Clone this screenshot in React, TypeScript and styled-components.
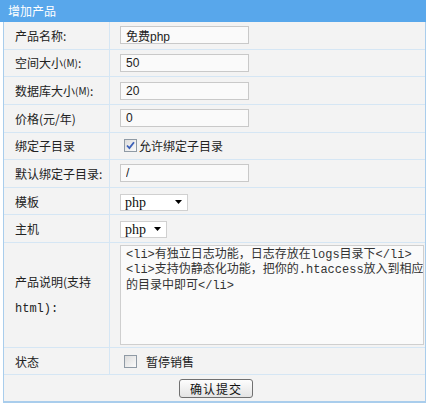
import React from "react";
import styled, { createGlobalStyle } from "styled-components";

const GlobalStyle = createGlobalStyle`
  html, body {
    margin: 0;
    padding: 0;
    background: #ffffff;
  }
  body {
    font-family: "Liberation Sans", "Noto Sans CJK SC", sans-serif;
    font-size: 12px;
    color: #222;
  }
`;

const Panel = styled.div`
  width: 426px;
`;

const Header = styled.div`
  height: 22px;
  line-height: 22px;
  padding-left: 8px;
  background: #58a7eb;
  color: #fff;
  font-size: 12px;
  font-family: "Noto Sans CJK SC", sans-serif;
  box-sizing: border-box;
`;

const Table = styled.div`
  margin-left: 3px;
  border-left: 1px solid #a9cdec;
  border-right: 1px solid #a9cdec;
  border-bottom: 2px solid #a9cdec;
  background: #f3f3f3;
`;

const Row = styled.div<{ $h?: number }>`
  display: grid;
  grid-template-columns: 106px 1fr;
  height: ${(p) => p.$h ?? 27.625}px;
  box-sizing: border-box;
  border-bottom: 1px solid #d5e6f4;
`;

const Label = styled.div`
  display: flex;
  align-items: center;
  padding-left: 11px;
  border-right: 1px solid #d5e6f4;
  font-family: "Noto Sans CJK SC", sans-serif;
  font-size: 12px;
  line-height: 25px;
  white-space: nowrap;
`;

const Small = styled.span`
  font-size: 10px;
`;

const Mono = styled.span`
  font-family: "Liberation Mono", monospace;
  font-size: 12px;
`;

const Cell = styled.div<{ $top?: boolean }>`
  display: flex;
  align-items: ${(p) => (p.$top ? "flex-start" : "center")};
  padding-left: 10px;
  padding-top: ${(p) => (p.$top ? "2px" : "0")};
  font-family: "Noto Sans CJK SC", sans-serif;
`;

const TextInput = styled.input`
  width: 129px;
  height: 18px;
  box-sizing: border-box;
  border: 1px solid #c9c9c9;
  background: #fafafa;
  padding: 0 5px;
  font-family: "Liberation Sans", "Noto Sans CJK SC", sans-serif;
  font-size: 12px;
  color: #222;
  outline: none;
`;

const SelectWrap = styled.div<{ $w: number }>`
  position: relative;
  width: ${(p) => p.$w}px;
  height: 17px;
`;

const Select = styled.select`
  appearance: none;
  width: 100%;
  height: 100%;
  box-sizing: border-box;
  border: 1px solid #d0d0d0;
  background: #fff;
  padding: 0 0 0 4px;
  font-family: "Liberation Serif", serif;
  font-size: 14px;
  color: #111;
  outline: none;
`;

const Arrow = styled.svg`
  position: absolute;
  right: 6px;
  top: 7px;
  pointer-events: none;
`;

const CheckLabel = styled.label<{ $gap: number }>`
  display: flex;
  align-items: center;
  gap: ${(p) => p.$gap}px;
  font-family: "Noto Sans CJK SC", sans-serif;
  font-size: 12px;
`;

const Box = styled.span`
  width: 11px;
  height: 11px;
  border: 1px solid #8f9aa5;
  background: linear-gradient(135deg, #dcdcdc, #fbfbfb);
  display: flex;
  align-items: center;
  justify-content: center;
  margin-left: 4px;
`;

const TextArea = styled.textarea`
  width: 304px;
  height: 100px;
  box-sizing: border-box;
  border: 1px solid #cfcfcf;
  background: #fafafa;
  padding: 2px 0 0 5px;
  font-family: "Liberation Mono", "Noto Sans CJK SC", monospace;
  font-size: 12px;
  line-height: 15.3px;
  color: #333;
  resize: none;
  overflow: hidden;
  white-space: pre;
  outline: none;
`;

const Footer = styled.div`
  height: 26px;
  display: flex;
  align-items: center;
  justify-content: center;
  padding-left: 3px;
`;

const SubmitButton = styled.button`
  width: 74px;
  height: 19px;
  padding: 0;
  border: 1px solid #707070;
  border-radius: 3px;
  background: linear-gradient(#fdfdfd, #e4e4e4);
  font-family: "Noto Sans CJK SC", sans-serif;
  font-size: 12px;
  letter-spacing: 1px;
  color: #111;
`;

const SelectBox = ({ w }: { w: number }) => (
  <SelectWrap $w={w}>
    <Select defaultValue="php">
      <option value="php">php</option>
    </Select>
    <Arrow width="7" height="4" viewBox="0 0 7 4">
      <path d="M0 0h7L3.5 4z" fill="#000" />
    </Arrow>
  </SelectWrap>
);

const Check = ({ checked }: { checked?: boolean }) => (
  <Box>
    {checked && (
      <svg width="9" height="9" viewBox="0 0 9 9">
        <path d="M1 4.5l2.4 2.6L8 1.2" fill="none" stroke="#3a5fb8" strokeWidth="1.8" />
      </svg>
    )}
  </Box>
);

const description =
  "<li>有独立日志功能，日志存放在logs目录下</li>\n<li>支持伪静态化功能，把你的.htaccess放入到相应\n的目录中即可</li>";

export default function App() {
  return (
    <>
      <GlobalStyle />
      <Panel>
        <Header>增加产品</Header>
        <Table>
          <Row>
            <Label>产品名称:</Label>
            <Cell>
              <TextInput defaultValue="免费php" />
            </Cell>
          </Row>
          <Row>
            <Label>
              空间大小<Small>(M)</Small>:
            </Label>
            <Cell>
              <TextInput defaultValue="50" />
            </Cell>
          </Row>
          <Row>
            <Label>
              数据库大小<Small>(M)</Small>:
            </Label>
            <Cell>
              <TextInput defaultValue="20" />
            </Cell>
          </Row>
          <Row>
            <Label>价格(元/年)</Label>
            <Cell>
              <TextInput defaultValue="0" />
            </Cell>
          </Row>
          <Row>
            <Label>绑定子目录</Label>
            <Cell>
              <CheckLabel $gap={2}>
                <Check checked />
                允许绑定子目录
              </CheckLabel>
            </Cell>
          </Row>
          <Row>
            <Label>默认绑定子目录:</Label>
            <Cell>
              <TextInput defaultValue="/" />
            </Cell>
          </Row>
          <Row>
            <Label>模板</Label>
            <Cell>
              <SelectBox w={68} />
            </Cell>
          </Row>
          <Row>
            <Label>主机</Label>
            <Cell>
              <SelectBox w={47} />
            </Cell>
          </Row>
          <Row $h={105}>
            <Label>
              <div>
                产品说明(支持
                <br />
                <Mono>html):</Mono>
              </div>
            </Label>
            <Cell $top>
              <TextArea defaultValue={description} wrap="off" />
            </Cell>
          </Row>
          <Row $h={27}>
            <Label>状态</Label>
            <Cell>
              <CheckLabel $gap={9}>
                <Check />
                暂停销售
              </CheckLabel>
            </Cell>
          </Row>
          <Footer>
            <SubmitButton>确认提交</SubmitButton>
          </Footer>
        </Table>
      </Panel>
    </>
  );
}
